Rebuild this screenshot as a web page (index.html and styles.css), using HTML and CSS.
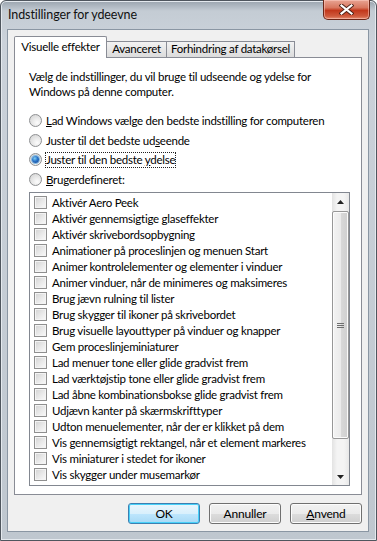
FILE: index.html
```html
<!DOCTYPE html>
<html lang="da">
<head>
  <meta charset="UTF-8">
  <title>Indstillinger for ydeevne</title>
  <link rel="stylesheet" href="styles.css">
</head>
<body>

  <div class="window">
    <div class="titlebar">
      <span class="title">Indstillinger for ydeevne</span>
      <button class="close-btn" type="button">
        <svg width="15" height="11" viewBox="0 0 15 11">
          <path d="M2.5 1.5 L12.5 9.5 M12.5 1.5 L2.5 9.5" stroke="#4a2016" stroke-width="4" stroke-linecap="square"/>
          <path d="M2.5 1.5 L12.5 9.5 M12.5 1.5 L2.5 9.5" stroke="#fff" stroke-width="2.2" stroke-linecap="square"/>
        </svg>
      </button>
    </div>

    <div class="client">
      <div class="tabs">
        <div class="tab tab-active tab-visual">Visuelle effekter</div>
        <div class="tab tab-advanced">Avanceret</div>
        <div class="tab tab-dep">Forhindring af datakørsel</div>
      </div>

      <div class="panel">
        <p class="intro">Vælg de indstillinger, du vil bruge til udseende og ydelse for Windows på denne computer.</p>

        <div class="radios">
          <label class="radio-row"><span class="radio"></span><span><u>L</u>ad Windows vælge den bedste indstilling for computeren</span></label>
          <label class="radio-row"><span class="radio"></span><span>Juster til det bedste ud<u>s</u>eende</span></label>
          <label class="radio-row"><span class="radio radio-on"></span><span class="focus">Juster til den bedste <u>y</u>delse</span></label>
          <label class="radio-row"><span class="radio"></span><span><u>B</u>rugerdefineret:</span></label>
        </div>

        <div class="listbox">
          <ul class="items">
            <li><span class="check"></span>Aktivér Aero Peek</li>
            <li><span class="check"></span>Aktivér gennemsigtige glaseffekter</li>
            <li><span class="check"></span>Aktivér skrivebordsopbygning</li>
            <li><span class="check"></span>Animationer på proceslinjen og menuen Start</li>
            <li><span class="check"></span>Animer kontrolelementer og elementer i vinduer</li>
            <li><span class="check"></span>Animer vinduer, når de minimeres og maksimeres</li>
            <li><span class="check"></span>Brug jævn rulning til lister</li>
            <li><span class="check"></span>Brug skygger til ikoner på skrivebordet</li>
            <li><span class="check"></span>Brug visuelle layouttyper på vinduer og knapper</li>
            <li><span class="check"></span>Gem proceslinjeminiaturer</li>
            <li><span class="check"></span>Lad menuer tone eller glide gradvist frem</li>
            <li><span class="check"></span>Lad værktøjstip tone eller glide gradvist frem</li>
            <li><span class="check"></span>Lad åbne kombinationsbokse glide gradvist frem</li>
            <li><span class="check"></span>Udjævn kanter på skærmskrifttyper</li>
            <li><span class="check"></span>Udton menuelementer, når der er klikket på dem</li>
            <li><span class="check"></span>Vis gennemsigtigt rektangel, når et element markeres</li>
            <li><span class="check"></span>Vis miniaturer i stedet for ikoner</li>
            <li><span class="check"></span>Vis skygger under musemarkør</li>
          </ul>
          <div class="scrollbar">
            <div class="arrow"><svg width="7" height="4" viewBox="0 0 7 4"><path d="M0 4 L3.5 0 L7 4 Z" fill="#222"/></svg></div>
            <div class="track">
              <div class="thumb">
                <svg width="7" height="7" viewBox="0 0 7 7"><path d="M0 1.5 H7 M0 3.5 H7 M0 5.5 H7" stroke="#6e6e6e" stroke-width="1"/></svg>
              </div>
            </div>
            <div class="arrow"><svg width="7" height="4" viewBox="0 0 7 4"><path d="M0 0 L3.5 4 L7 0 Z" fill="#222"/></svg></div>
          </div>
        </div>
      </div>

      <div class="buttons">
        <button class="btn btn-default" type="button">OK</button>
        <button class="btn" type="button">Annuller</button>
        <button class="btn" type="button"><u>A</u>nvend</button>
      </div>
    </div>
  </div>

</body>
</html>
```

FILE: styles.css
```css
body {
  margin: 0;
  background: #fff;
  font-family: Lato, "Noto Sans", sans-serif;
  font-size: 11.5px;
  letter-spacing: -0.25px;
  color: #000;
}

.window {
  box-sizing: border-box;
  width: 377px;
  height: 541px;
  border: 1px solid #4f565e;
  border-radius: 6px 6px 0 0;
  background: linear-gradient(to bottom, #9aa4ae 0, #c4ccd4 10px, #cbd2da 40px, #bfc7cf 100%);
  box-shadow: inset 0 0 0 1px #e4e9ee;
}

.titlebar {
  display: flex;
  justify-content: space-between;
  align-items: flex-start;
  height: 28px;
}

.title {
  padding: 6px 0 0 7px;
  line-height: 16px;
  font-size: 12.5px;
  letter-spacing: -0.1px;
  color: #111;
}

.close-btn {
  width: 47px;
  height: 20px;
  margin: -1px 6px 0 0;
  padding: 0;
  border: 1px solid #6b2618;
  border-top: none;
  border-radius: 0 0 5px 5px;
  background: linear-gradient(to bottom, #e8a493 0, #d8775f 40%, #c2381c 55%, #cf5a3d 85%, #e68f73 100%);
  box-shadow: inset 0 0 0 1px rgba(255, 210, 200, 0.5);
  display: flex;
  align-items: center;
  justify-content: center;
}

.client {
  width: 362px;
  height: 503px;
  box-sizing: border-box;
  margin-left: 6px;
  border: 1px solid #8a96a3;
  background: #f0f0f0;
  padding: 7px 6px 7px 6px;
  display: flex;
  flex-direction: column;
}

.tabs {
  display: flex;
  align-items: flex-end;
  height: 20px;
  position: relative;
  z-index: 1;
}

.tab {
  box-sizing: border-box;
  height: 16px;
  line-height: 14px;
  border: 1px solid #898c95;
  border-bottom: none;
  background: linear-gradient(to bottom, #f2f2f2, #dcdcdc);
  text-align: center;
  margin-right: -1px;
  white-space: nowrap;
}

.tab-active {
  height: 22px;
  margin-bottom: -1px;
  line-height: 19px;
  background: #fff;
  border-radius: 2px 2px 0 0;
  padding-bottom: 2px;
}

.tab-visual { width: 93px; }
.tab-advanced { width: 61px; }
.tab-dep { width: 129px; }

.panel {
  box-sizing: border-box;
  height: 439px;
  border: 1px solid #898c95;
  background: #fff;
  padding: 11px 11px 0 14px;
}

.intro {
  margin: 0;
  line-height: 15px;
  width: 300px;
}

.radios {
  margin-top: 12px;
  display: flex;
  flex-direction: column;
}

.radio-row {
  display: flex;
  align-items: center;
  height: 19.5px;
  white-space: nowrap;
}

.radio {
  flex-shrink: 0;
  box-sizing: border-box;
  width: 13px;
  height: 13px;
  margin-right: 4px;
  border-radius: 50%;
  border: 1px solid #8e9092;
  background: radial-gradient(circle at 65% 70%, #fcfcfc 0, #e8e8e8 45%, #cfcfcf 100%);
  display: flex;
  align-items: center;
  justify-content: center;
}

.radio-on::after {
  content: "";
  width: 7px;
  height: 7px;
  border-radius: 50%;
  background: radial-gradient(circle at 40% 35%, #7fd0f5 0, #2a74c8 45%, #0f3e8a 100%);
  box-shadow: 0 0 0 1px #7fb6e0;
}

.focus {
  outline: 1px dotted #222;
  outline-offset: 0;
  line-height: 14px;
}

.listbox {
  box-sizing: border-box;
  margin-top: 3px;
  width: 321px;
  height: 294px;
  border: 1px solid #828790;
  display: flex;
}

.items {
  flex: 1;
  list-style: none;
  margin: 0;
  padding: 1px 0 0 4px;
}

.items li {
  display: flex;
  align-items: center;
  height: 16px;
  white-space: nowrap;
}

.check {
  flex-shrink: 0;
  box-sizing: border-box;
  width: 13px;
  height: 13px;
  margin-right: 5px;
  border: 1px solid #8f8f8f;
  background: linear-gradient(135deg, #d2d2d2 0, #eaeaea 55%, #fafafa 100%);
  box-shadow: inset 0 0 0 1px #f4f4f4;
}

.scrollbar {
  flex-shrink: 0;
  width: 17px;
  display: flex;
  flex-direction: column;
  background: linear-gradient(to right, #e3e3e3, #f4f4f4 30%, #f4f4f4 70%, #e8e8e8);
}

.arrow {
  height: 17px;
  display: flex;
  align-items: center;
  justify-content: center;
}

.track {
  flex: 1;
  padding: 1px 0;
  display: flex;
}

.thumb {
  box-sizing: border-box;
  width: 17px;
  height: 228px;
  border: 1px solid #979797;
  border-radius: 2px;
  background: linear-gradient(to right, #f3f3f3 0, #ebebeb 50%, #d9d9d9 51%, #cfcfcf 100%);
  box-shadow: inset 0 0 0 1px #fbfbfb;
  display: flex;
  align-items: center;
  justify-content: center;
}

.buttons {
  display: flex;
  justify-content: flex-end;
  gap: 9px;
  margin-top: 8px;
}

.btn {
  box-sizing: border-box;
  width: 72px;
  height: 21px;
  padding: 0;
  border: 1px solid #707070;
  border-radius: 3px;
  background: linear-gradient(to bottom, #f2f2f2 0, #ebebeb 50%, #dddddd 51%, #cfcfcf 100%);
  box-shadow: inset 0 0 0 1px #fcfcfc;
  font-family: inherit;
  font-size: 12px;
  letter-spacing: -0.2px;
  color: #000;
}

.btn-default {
  border-color: #3c7fb1;
  background: linear-gradient(to bottom, #eaf6fd 0, #d9f0fc 50%, #bee6fd 51%, #a7d9f5 100%);
  box-shadow: inset 0 0 0 1px #48d1f9;
}
```
